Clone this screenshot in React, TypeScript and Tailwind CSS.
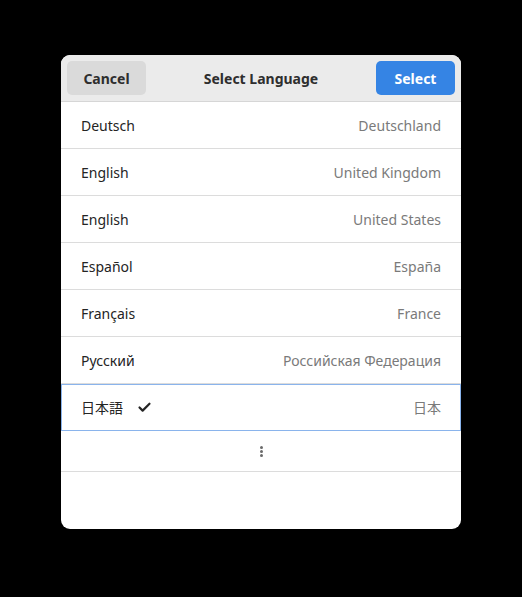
import { Check } from "lucide-react";

type Lang = { name: string; region: string; selected?: boolean };

const langs: Lang[] = [
  { name: "Deutsch", region: "Deutschland" },
  { name: "English", region: "United Kingdom" },
  { name: "English", region: "United States" },
  { name: "Español", region: "España" },
  { name: "Français", region: "France" },
  { name: "Русский", region: "Российская Федерация" },
  { name: "日本語", region: "日本", selected: true },
];

const font = {
  fontFamily: '"Noto Sans", "Noto Sans CJK JP", sans-serif',
};

export default function App() {
  return (
    <div className="w-[522px] h-[597px] bg-black pt-[55px] pl-[61px]" style={font}>
      <div className="w-[400px] h-[474px] bg-white rounded-[9px] overflow-hidden flex flex-col">
        {/* ----- header ----- */}
        <div className="h-[47px] shrink-0 bg-[#ebebeb] border-b border-[#d6d6d6] flex items-center justify-between px-[6px]">
          <button
            type="button"
            className="w-[79px] h-[34px] rounded-[5px] bg-[#dadada] text-[#2e2e2e] text-[14px] font-bold"
          >
            Cancel
          </button>
          <div className="text-[14px] font-bold text-[#2e2e2e]">Select Language</div>
          <button
            type="button"
            className="w-[79px] h-[34px] rounded-[5px] bg-[#3584e4] text-white text-[14px] font-bold"
          >
            Select
          </button>
        </div>
        {/* ----- list ----- */}
        <ul>
          {langs.map((l, i) =>
            l.selected ? (
              <li
                key={i}
                className="h-[47px] border border-[#8ab4ec] flex items-center justify-between px-[19px] text-[14px]"
              >
                <span className="flex items-center text-[#242424]">
                  {l.name}
                  <Check className="ml-[14px] w-[15px] h-[15px] text-[#242424]" strokeWidth={3.5} />
                </span>
                <span className="text-[#7a7a7a]">{l.region}</span>
              </li>
            ) : (
              <li
                key={i}
                className="h-[47px] border-b border-[#dcdcdc] flex items-center justify-between px-[20px] text-[14px]"
              >
                <span className="text-[#242424]">{l.name}</span>
                <span className="text-[#7a7a7a]">{l.region}</span>
              </li>
            )
          )}
          <li className="h-[41px] border-b border-[#dcdcdc] flex items-center justify-center">
            <span className="flex flex-col gap-[1px]">
              <span className="w-[3px] h-[3px] rounded-full bg-[#6a6a6a]" />
              <span className="w-[3px] h-[3px] rounded-full bg-[#6a6a6a]" />
              <span className="w-[3px] h-[3px] rounded-full bg-[#6a6a6a]" />
            </span>
          </li>
        </ul>
      </div>
    </div>
  );
}
